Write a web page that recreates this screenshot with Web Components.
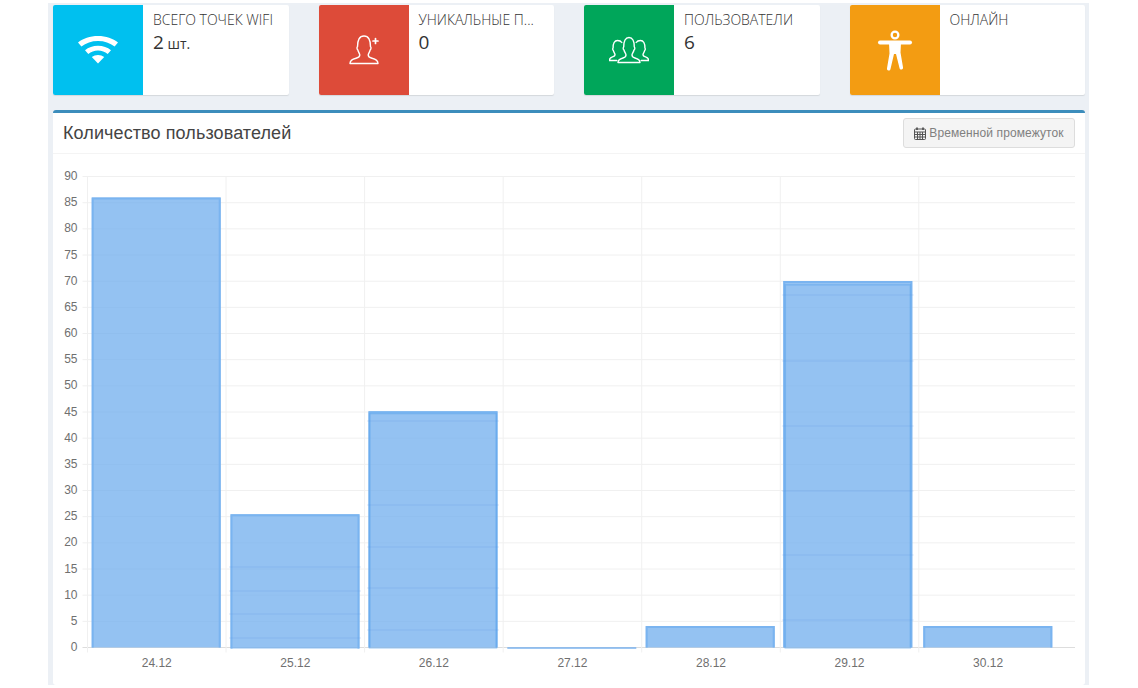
<!DOCTYPE html>
<html>
<head>
<meta charset="utf-8">
<style>
  html, body { margin: 0; padding: 0; background: #fff; }
  body { font-family: "Open Sans", sans-serif; }
</style>
</head>
<body>
<app-content>
  <info-box label="ВСЕГО ТОЧЕК WIFI" color="#00c0ef" icon="wifi">2<small> шт.</small></info-box>
  <info-box label="УНИКАЛЬНЫЕ П..." color="#dd4b39" icon="user">0</info-box>
  <info-box label="ПОЛЬЗОВАТЕЛИ" color="#00a65a" icon="users">6</info-box>
  <info-box label="ОНЛАЙН" color="#f39c12" icon="body"></info-box>
  <chart-box slot="chart" title="Количество пользователей" button="Временной промежуток"></chart-box>
</app-content>
<script>
class AppContent extends HTMLElement {
  constructor () {
    super()
    const shadow = this.attachShadow({mode: 'open'})
    shadow.innerHTML = `
      <style>
        :host { display: block; width: 1041px; height: 688px; box-sizing: border-box; margin-left: 48px; padding: 5px 4px 0 5px; background: #ecf0f5; box-shadow: inset 0 3px 0 #fff, inset 0 -3px 0 #fff; overflow: hidden; }
        .boxes { display: grid; grid-template-columns: repeat(4, 235.5px); column-gap: 30px; height: 90px; margin-bottom: 15px; }
      </style>
      <div class="boxes"><slot></slot></div>
      <slot name="chart"></slot>
    `
  }
}

const ICONS = {
  wifi: `<svg width="40" height="28" viewBox="0 0 40 28" fill="#fff">
    <path d="M0 6.500C5 2.500 12 0 20 0s15 2.500 20 6.500l-3.400 4C32 6.800 26.500 4.900 20 4.900S8 6.800 3.400 10.500z"/>
    <path d="M7 14.200C10.400 11.300 15 9.700 20 9.700s9.600 1.600 13 4.500l-3.300 3.800C27 15.800 23.700 14.500 20 14.500s-7 1.300-9.700 3.500z"/>
    <path d="M13.800 21c1.700-1.300 3.900-2 6.200-2s4.500.7 6.200 2L20 27.500z"/>
  </svg>`,
  user: `<svg width="30" height="30" viewBox="0 0 30 30" fill="none" stroke="#fff" stroke-width="1.400" stroke-linecap="round" stroke-linejoin="round">
    <path d="M1 28.500h28c0-3-2.500-4.300-6-5.200-3-.8-3.800-1.800-3.800-3.300 0-1.300 1.400-2.700 2-5.100.5-.3.800-1 .8-1.900 0-.7-.2-1.100-.5-1.300C21.600 5 19.500 1 15 1S8.400 5 8.500 11.700c-.3.200-.5.600-.5 1.300 0 .9.300 1.600.8 1.900.6 2.400 2 3.800 2 5.100 0 1.500-.8 2.500-3.800 3.300-3.500.9-6 2.200-6 5.200z"/>
    <path d="M26.500 3.500v5M24 6h5" stroke-width="1.700"/>
  </svg>`,
  users: `<svg width="40" height="28" viewBox="0 0 40 28" fill="none" stroke="#fff" stroke-width="1.400" stroke-linecap="round" stroke-linejoin="round">
    <path d="M9 26.500h22c0-2.500-2-3.700-5-4.500-2.300-.6-3-1.500-3-3 0-1.300 1.400-2.600 2-5 .5-.2.800-1 .8-1.800 0-.6-.2-1-.5-1.200C25.400 5 23.500 1.500 20 1.500S14.600 5 14.700 11c-.3.200-.5.600-.5 1.200 0 .8.300 1.600.8 1.800.6 2.400 2 3.700 2 5 0 1.500-.7 2.400-3 3-3 .8-5 2-5 4.500z"/>
    <path d="M12.800 6.500C12 5.200 10.300 4.500 8.500 4.500c-3 0-4.500 2.800-4.400 7.500-.3.200-.4.500-.4 1 0 .7.200 1.200.6 1.400.5 2 1.700 3 1.700 4.100 0 1.200-.6 1.900-2.500 2.400-2 .6-3.200 1.700-3.200 3.600h7.500"/>
    <path d="M27.200 6.500C28 5.200 29.700 4.500 31.500 4.500c3 0 4.500 2.800 4.400 7.500.3.200.4.500.4 1 0 .7-.2 1.200-.6 1.400-.5 2-1.700 3-1.700 4.100 0 1.200.6 1.900 2.500 2.400 2 .6 3.200 1.700 3.200 3.600h-7.500"/>
  </svg>`,
  body: `<svg width="36" height="42" viewBox="0 0 36 42" fill="#fff">
    <path fill-rule="evenodd" d="M18 1.500a4.500 4.500 0 1 1 0 9 4.500 4.500 0 0 1 0-9zm0 2.300a2.200 2.200 0 1 0 0 4.400 2.200 2.200 0 0 0 0-4.400z"/>
    <rect x="1" y="11.500" width="34" height="4" rx="2"/>
    <path d="M12 14h12l-.5 9.500 2.500 14.700c.2 1.300-.4 2.100-1.400 2.300-1 .2-1.800-.4-2.100-1.600L19 25h-2l-3.500 14.900c-.3 1.200-1.100 1.800-2.100 1.600-1-.2-1.600-1-1.400-2.300l2.500-14.700z"/>
  </svg>`
}

class InfoBox extends HTMLElement {
  constructor () {
    super()
    const shadow = this.attachShadow({mode: 'open'})
    const color = this.getAttribute('color')
    const label = this.getAttribute('label')
    const icon = ICONS[this.getAttribute('icon')]
    shadow.innerHTML = `
      <style>
        :host { display: flex; background: #fff; border-radius: 2px; box-shadow: 0 1px 1px rgba(0,0,0,0.1); overflow: hidden; height: 90px; font-family: "Open Sans", sans-serif; font-weight: 300; color: #333; }
        .icon { flex: 0 0 90px; height: 90px; display: flex; align-items: center; justify-content: center; }
        .text { padding: 5px 10px; min-width: 0; }
        .label { font-size: 14px; line-height: 20px; white-space: nowrap; }
        .value { font-size: 19px; line-height: 25px; font-weight: 400; color: #333; }
        ::slotted(small) { font-size: 14px; font-weight: 400; }
      </style>
      <div class="icon" style="background:${color}">${icon}</div>
      <div class="text">
        <div class="label">${label}</div>
        <div class="value"><slot></slot></div>
      </div>
    `
  }
}

class ChartBox extends HTMLElement {
  constructor () {
    super()
    const shadow = this.attachShadow({mode: 'open'})
    shadow.innerHTML = `
      <style>
        :host { display: block; background: #fff; border-top: 3px solid #3c8dbc; border-radius: 3px; box-sizing: border-box; height: 575px; font-family: "Liberation Sans", Arial, sans-serif; }
        .header { display: flex; align-items: center; justify-content: space-between; height: 40px; padding: 0 10px; border-bottom: 1px solid #f4f4f4; }
        h3 { margin: 0; font-size: 18px; font-weight: 400; letter-spacing: 0.1px; color: #444; }
        button { font: inherit; font-size: 12px; letter-spacing: 0.1px; color: #808080; background: #f4f4f4; border: 1px solid #ddd; border-radius: 3px; height: 30px; width: 172px; padding: 0; display: flex; align-items: center; justify-content: center; gap: 3px; }
        .plot { display: block; }
      </style>
      <div class="header">
        <h3>${this.getAttribute('title')}</h3>
        <button>
          <svg width="12" height="13" viewBox="0 0 12 13" fill="none" stroke="#555" stroke-width="1"><rect x="0.500" y="2" width="11" height="10.500" rx="1"/><path d="M0.500 5h11M0.500 7.500h11M0.500 10h11M3.500 5v7.500M6 5v7.500M8.500 5v7.500"/><path d="M3 0.500v2.500M9 0.500v2.500" stroke-width="1.800"/></svg>
          <span>${this.getAttribute('button')}</span>
        </button>
      </div>
      <users-chart class="plot"></users-chart>
    `
  }
}

class UsersChart extends HTMLElement {
  constructor () {
    super()
    const shadow = this.attachShadow({mode: 'open'})
    // coordinates inside the svg: x = page x - 53, y = page y - 154
    const y0 = 493.5, x0 = 34.5, step = 138.55, unit = 5.233
    const days = ['24.12', '25.12', '26.12', '27.12', '28.12', '29.12', '30.12']
    // left = page x of the bar, ghost = page y of the faint lines left by older draws
    const cols = [
      {left: 91.7, value: 85.8},
      {left: 230.5, value: 25.26, low: 1, ghost: [567, 591, 614, 638]},
      {left: 368.5, value: 44.95, over: 44.7, ghost: [421, 505, 547, 588, 630]},
      {left: 507.3, flat: true},
      {left: 645.7, value: 3.9},
      {left: 783.3, value: 69.84, over: 69.3, ghost: [295, 361, 426, 491, 555, 620]},
      {left: 923.3, value: 3.9}
    ]
    const fill = 'rgba(112,174,238,0.75)'
    const edge = '#7ab4f0'
    const w = 129
    let grid = ''
    let out = ''
    for (let i = 0; i <= 18; i++) {
      const v = i * 5
      const y = y0 - v * unit
      grid += `<line x1="${x0 - 5}" x2="1022" y1="${y}" y2="${y}" stroke="${i ? '#f0f0f0' : '#ddd'}"/>`
      out += `<text x="${x0 - 10}" y="${y + 3.5}" text-anchor="end">${v}</text>`
    }
    for (let i = 0; i < 7; i++) {
      const x = x0 + i * step
      grid += `<line x1="${x}" x2="${x}" y1="${y0 - 90 * unit}" y2="${y0 + 5}" stroke="#f0f0f0"/>`
      out += `<text x="${x + step / 2}" y="${y0 + 19}" text-anchor="middle">${days[i]}</text>`
    }
    let bars = ''
    cols.forEach(c => {
      const x = c.left - 53
      if (c.flat) {
        bars += `<rect x="${x}" y="${y0 - 0.2}" width="${w}" height="1.400" fill="#72aeee"/>`
        return
      }
      const top = y0 - c.value * unit
      const low = y0 + (c.low || 0)
      bars += `<rect x="${x}" y="${top - 1}" width="${w}" height="${low - top + 1}" fill="${fill}"/>`
      // chart.js skips the bottom border
      bars += `<path d="M${x + 1} ${low}V${top}H${x + w - 1}V${low}" fill="none" stroke="${edge}" stroke-width="2"/>`
      if (c.over) {
        const t = y0 - c.over * unit
        const inset = c.over > 60 ? 2 : 1
        bars += `<rect x="${x + inset}" y="${t}" width="${w - inset * 2}" height="${y0 + 0.500 - t}" fill="none" stroke="rgba(85,160,235,0.4)" stroke-width="1.500"/>`
      }
      ;(c.ghost || []).forEach(py => {
        bars += `<line x1="${x - 1.500}" x2="${x + w + 1.500}" y1="${py - 154}" y2="${py - 154}" stroke="rgba(90,150,225,0.14)" stroke-width="1.500"/>`
      })
    })
    shadow.innerHTML = `
      <style>
        :host { display: block; }
        svg { display: block; }
        text { font-family: "Liberation Sans", Arial, sans-serif; font-size: 12px; fill: #707070; }
      </style>
      <svg width="1032" height="530" viewBox="0 0 1032 530">${grid}${bars}${out}</svg>
    `
  }
}

customElements.define('app-content', AppContent)
customElements.define('info-box', InfoBox)
customElements.define('chart-box', ChartBox)
customElements.define('users-chart', UsersChart)
</script>
</body>
</html>
